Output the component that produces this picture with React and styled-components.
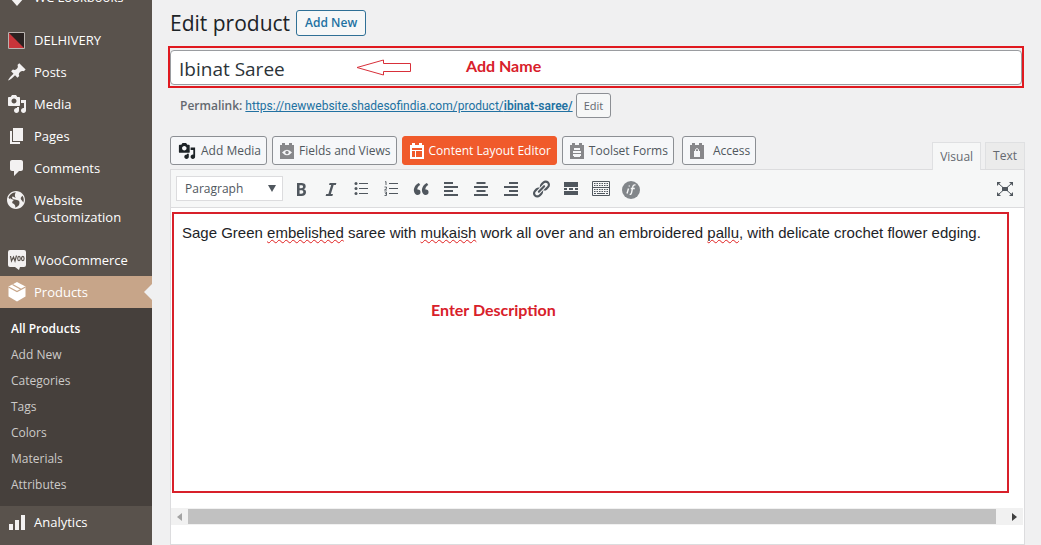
import React from "react";
import styled, { createGlobalStyle, css } from "styled-components";

const Global = createGlobalStyle`
  *, *::before, *::after { box-sizing: border-box; }
  html, body, #root { height: 100%; }
  body {
    margin: 0;
    background: #f0f0f1;
    color: #3c434a;
    font: 12px/18px "Open Sans", "Noto Sans", sans-serif;
    overflow: hidden;
  }
  button, input, select { font: inherit; color: inherit; margin: 0; }
  ul { list-style: none; margin: 0; padding: 0; }
`;

const Page = styled.div`
  display: flex;
  height: 100vh;
  overflow: hidden;
`;

/* ---------- sidebar ---------- */

const Sidebar = styled.nav`
  flex: 0 0 152px;
  background: #59524c;
  overflow: hidden;
`;

const Menu = styled.ul`
  margin-top: -19px;
`;

const MenuItem = styled.li`
  margin-top: ${(p) => (p.$separated ? "11px" : "0")};
`;

const MenuLink = styled.a`
  position: relative;
  display: flex;
  gap: 7px;
  padding: 8px 12px 7px 7px;
  font-size: 13px;
  line-height: 17px;
  color: #fff;
  text-decoration: none;
  background: ${(p) => (p.$current ? "#c7a589" : "transparent")};
  ${(p) =>
    p.$current &&
    css`
      &::after {
        content: "";
        position: absolute;
        right: 0;
        top: 8px;
        border: 8px solid transparent;
        border-left: 0;
        border-right-color: #f0f0f1;
      }
    `}
`;

const MenuIcon = styled.svg`
  flex: none;
  width: 20px;
  height: 20px;
  margin: -2px 0 -1px;
  fill: #f3f1f1;
`;

const Submenu = styled.ul`
  padding: 8px 0;
  background: #46403c;
`;

const SubmenuLink = styled.a`
  display: block;
  padding: 4px 11px;
  line-height: 18px;
  color: ${(p) => (p.$current ? "#fff" : "#cdcbc9")};
  font-weight: ${(p) => (p.$current ? 600 : 400)};
  text-decoration: none;
`;

/* ---------- main column ---------- */

const Main = styled.main`
  flex: 1;
  min-width: 0;
  display: flex;
  flex-direction: column;
  padding: 10px 16px 0 18px;
`;

const Heading = styled.header`
  display: flex;
  align-items: center;
  gap: 6px;
  height: 26px;
  margin-bottom: 10px;
`;

const Title = styled.h1`
  margin: 0;
  font-size: 21px;
  line-height: 26px;
  font-weight: 400;
  color: #1d2327;
`;

const AddNewButton = styled.button`
  height: 26px;
  padding: 0 8px;
  border: 1px solid #2f7096;
  border-radius: 3px;
  background: #f6f7f7;
  color: #2271a1;
  font-weight: 600;
`;

const NameFrame = styled.div`
  position: relative;
  height: 42px;
  margin: 0 1px 0 -2px;
  padding: 2px 0 0;
  border: 2px solid #e0191f;
`;

const NameInput = styled.input`
  display: block;
  width: 100%;
  height: 35px;
  padding: 2px 8px 0;
  border: 1px solid #9a9ca0;
  border-radius: 4px;
  background: #fff;
  font-size: 19px;
  color: #2c3338;
`;

const Note = styled.span`
  position: absolute;
  color: #d8202a;
  font: 700 16px/20px Lato, sans-serif;
  white-space: nowrap;
`;

const NameNote = styled(Note)`
  left: 296px;
  top: 8px;
`;

const DescriptionNote = styled(Note)`
  left: 257px;
  top: 86px;
`;

const Arrow = styled.svg`
  position: absolute;
  left: 186px;
  top: 11px;
  width: 56px;
  height: 17px;
  fill: #fff;
  stroke: #d8303a;
`;

const Permalink = styled.div`
  display: flex;
  align-items: center;
  gap: 3px;
  height: 25px;
  margin-top: 5px;
  padding-left: 10px;
  color: #646970;
  white-space: nowrap;

  strong { font-weight: 600; }
`;

const PermalinkUrl = styled.a`
  color: #2271a1;
  font-family: Roboto, "Open Sans", sans-serif;
`;

const EditButton = styled.button`
  height: 25px;
  padding: 0 7px;
  border: 1px solid #8c8f94;
  border-radius: 3px;
  background: #f6f7f7;
  font-size: 11px;
`;

const Tools = styled.div`
  display: flex;
  justify-content: space-between;
  align-items: flex-end;
  height: 33px;
  margin-top: 18px;
`;

const MediaButtons = styled.div`
  display: flex;
  gap: 5px;
  align-self: flex-start;
`;

const MediaButton = styled.button`
  display: flex;
  align-items: center;
  gap: 4px;
  height: 29px;
  padding: 0 5px 0 6px;
  border: 1px solid ${(p) => (p.$primary ? "#f05a2b" : "#8c8f94")};
  border-radius: 3px;
  background: ${(p) => (p.$primary ? "#f05a2b" : "#f6f7f9")};
  color: ${(p) => (p.$primary ? "#fff" : "#50575e")};
  white-space: nowrap;

  svg {
    flex: none;
    width: 16px;
    height: 18px;
    fill: ${(p) => (p.$primary ? "#fff" : "#87878a")};
  }
  svg.media { width: 20px; fill: #1d2327; }
  &:last-child { margin-left: 3px; gap: 8px; }
`;

const Tabs = styled.div`
  display: flex;
  gap: 4px;
`;

const Tab = styled.button`
  height: ${(p) => (p.$active ? "28px" : "27px")};
  margin-bottom: ${(p) => (p.$active ? "-1px" : "0")};
  padding: 0 7px;
  border: 1px solid #dfe0e2;
  border-bottom: 0;
  position: relative;
  background: ${(p) => (p.$active ? "#f6f7f7" : "#ebebeb")};
  color: #646970;
`;

const Editor = styled.section`
  flex: 1;
  min-height: 0;
  display: flex;
  flex-direction: column;
  border: 1px solid #dcdcde;
  border-bottom: 0;
  background: #fff;
`;

const Toolbar = styled.div`
  flex: none;
  display: flex;
  align-items: center;
  height: 38px;
  padding: 0 4px 0 5px;
  border-bottom: 1px solid #dcdcde;
  background: #f6f7f7;
`;

const FormatBox = styled.div`
  position: relative;
  width: 107px;
  margin-right: 3px;

  &::after {
    content: "";
    position: absolute;
    right: 7px;
    top: 9px;
    border: 4px solid transparent;
    border-top: 7px solid #50575e;
    border-bottom: 0;
    pointer-events: none;
  }
`;

const FormatSelect = styled.select`
  display: block;
  appearance: none;
  width: 100%;
  height: 25px;
  padding: 0 8px;
  border: 1px solid #dcdcde;
  border-radius: 0;
  background: #fff;
  color: #50575e;
`;

const ToolButton = styled.button`
  display: grid;
  place-items: center;
  width: 30px;
  height: 30px;
  padding: 0;
  border: 0;
  background: none;
  margin-left: ${(p) => (p.$end ? "auto" : "0")};

  svg { width: 20px; height: 20px; fill: #50575e; }
`;

const Body = styled.div`
  position: relative;
  flex: 0 0 281px;
  margin: 4px 15px 15px 1px;
  padding: 9px 8px;
  border: 2px solid #d8202a;
`;

const Description = styled.div`
  height: 100%;
  outline: 0;
  color: #1d2327;
  font: 15px/20px "Liberation Sans", Arial, sans-serif;
`;

const Misspelt = styled.span`
  text-decoration: underline wavy #e02020 1px;
  text-underline-offset: 1px;
  text-decoration-skip-ink: none;
`;

const ScrollTrack = styled.div`
  flex: none;
  display: flex;
  align-items: center;
  height: 17px;
  margin-right: 1px;
  background: #f1f1f1;
`;

const ScrollArrow = styled.button`
  width: 17px;
  height: 17px;
  padding: 0;
  border: 0;
  background: none;
  display: grid;
  place-items: center;

  svg { width: 5px; height: 8px; fill: ${(p) => (p.$enabled ? "#404040" : "#a3a3a3")}; }
`;

const ScrollArea = styled.div`
  flex: 1;
  padding-right: 10px;
`;

const ScrollThumb = styled.div`
  height: 15px;
  background: #c1c1c1;
`;

const StatusBar = styled.footer`
  flex: none;
  margin-top: 19px;
  height: 24px;
  border-top: 1px solid #dcdcde;
  background: #f0f0f1;
`;

/* ---------- icons ---------- */

const mediaPath =
  "M13 11V4c0-.55-.45-1-1-1h-1.67L9 1H5L3.67 3H2c-.55 0-1 .45-1 1v7c0 .55.45 1 1 1h10c.55 0 1-.45 1-1zM7 4.5c1.38 0 2.5 1.12 2.5 2.5S8.38 9.5 7 9.5 4.5 8.38 4.5 7 5.62 4.5 7 4.5zM14 6h5v10.5c0 1.38-1.12 2.5-2.5 2.5S14 17.88 14 16.5s1.12-2.5 2.5-2.5c.17 0 .34.02.5.05V9h-3V6zm-4 8.05V13h2v3.5c0 1.38-1.12 2.5-2.5 2.5S7 17.88 7 16.5 8.12 14 9.5 14c.17 0 .34.02.5.05z";

const menuIcons = {
  diamond: <path d="M6 5h8l3 6-7 8-7-8z" />,
  delhivery: (
    <>
      <path d="M1.500 2.500h16v16h-16z" fill="#2a2221" />
      <path d="M2 3v15h15z" fill="#c8353a" />
      <path d="M1.500 2.500h16v16h-16z" fill="none" stroke="#b9b3af" />
    </>
  ),
  pin: (
    <path d="M10.440 3.020l1.820-1.820 6.360 6.350-1.830 1.820c-1.050-.68-2.480-.57-3.410.36l-.75.75c-.92.93-1.040 2.350-.35 3.410l-1.830 1.820-2.410-2.410-2.800 2.790c-.42.42-3.380 2.710-3.800 2.290s1.860-3.390 2.280-3.810l2.790-2.790L4.100 9.360l1.830-1.820c1.050.69 2.480.57 3.400-.36l.75-.75c.93-.92 1.050-2.350.36-3.410z" />
  ),
  media: <path d={mediaPath} />,
  pages: <path d="M6 15V2h10v13H6zm-1 1h8v2H3V5h2v11z" />,
  comment: (
    <path d="M5 2h9c1.100 0 2 .9 2 2v7c0 1.100-.9 2-2 2h-2l-5 5v-5H5c-1.100 0-2-.9-2-2V4c0-1.100.9-2 2-2z" />
  ),
  globe: (
    <path
      transform="translate(0 1)"
      d="M9 0C4.030 0 0 4.030 0 9s4.030 9 9 9 9-4.030 9-9-4.030-9-9-9zm3.460 11.950c0 1.470-.8 3.300-4.060 4.700.3-4.170-2.520-3.690-3.200-5 .126-1.100.804-2.063 1.800-2.550-1.552-.266-3-.96-4.180-2 .05.47.28.904.64 1.210-.782-.295-1.458-.817-1.940-1.500.977-3.225 3.883-5.482 7.250-5.630-.84 1.380-1.500 4.130 0 5.570C7.230 7 6.260 5 5.410 5.790c-1.130 1.060.33 2.510 3.420 3.080 3.290.59 3.660 1.580 3.630 3.080zm1.340-4c-.32-1.110.62-2.230 1.690-3.140 1.356 1.955 1.670 4.450.84 6.680-.77-1.890-2.170-2.320-2.530-3.570v.03z"
    />
  ),
  woo: (
    <>
      <path d="M3 0h14q2 0 2 2v13q0 2-2 2h-4l-1 3-4-3H3q-2 0-2-2V2q0-2 2-2z" />
      <path
        d="M3.500 6l1 5 2-4 1.500 4L9.500 5.500"
        fill="none"
        stroke="#59524c"
        strokeWidth="1.200"
      />
      <ellipse cx="12" cy="8.500" rx="1.300" ry="2.100" fill="none" stroke="#59524c" strokeWidth="1.100" />
      <ellipse cx="15.800" cy="8.500" rx="1.300" ry="2.100" fill="none" stroke="#59524c" strokeWidth="1.100" />
    </>
  ),
  box: (
    <>
      <path d="M10 0l8.500 4.500v10L10 19.500 1.500 14.500v-10z" fill="#fff" />
      <path d="M1.500 5L10 9.500 18.500 5M5.500 2.500l8.500 4.700" fill="none" stroke="#c7a589" strokeWidth="1.200" />
    </>
  ),
  bars: <path d="M2 12h4v6H2zM8 8h4v10H8zM14 3h4v15h-4z" />,
};

const Brick = ({ children }) => (
  <svg viewBox="0 0 16 18" aria-hidden="true">
    <path fillRule="evenodd" d="M3 1h3v2h4V1h3v2h2v14H1V3h2z" />
    {children}
  </svg>
);

const AlignIcon = ({ x }) => (
  <>
    {[9, 14, 9, 14].map((w, i) => (
      <rect key={i} x={3 + (14 - w) * x} y={3 + i * 4} width={w} height="2" />
    ))}
  </>
);

const toolIcons = [
  [
    "Bold",
    <path d="M6 4v13h4.540c1.370 0 2.460-.33 3.260-1 .8-.66 1.200-1.580 1.200-2.770 0-.84-.17-1.510-.51-2.010s-.9-.85-1.670-1.030v-.09c.57-.1 1.020-.4 1.360-.9s.51-1.130.51-1.910c0-1.140-.39-1.980-1.170-2.500C12.750 4.260 11.500 4 9.780 4H6zm2.570 5.150V6.260h1.360c.73 0 1.270.11 1.610.32.34.22.51.58.51 1.070 0 .54-.16.92-.47 1.150s-.82.35-1.510.35h-1.500zm0 2.190h1.600c1.440 0 2.160.53 2.160 1.610 0 .6-.17 1.050-.51 1.340s-.86.43-1.570.43H8.570v-3.380z" />,
  ],
  ["Italic", <path d="M14.780 6h-2.130l-2.800 9h2.120l-.62 2H4.600l.62-2h2.140l2.800-9H8.030l.62-2h6.750z" />],
  [
    "Bulleted list",
    <>
      <path d="M8 4h9v1H8zM8 9h9v1H8zM8 14h9v1H8z" />
      {[4.5, 9.5, 14.5].map((y) => (
        <circle key={y} cx="5" cy={y} r="1.500" />
      ))}
    </>,
  ],
  [
    "Numbered list",
    <>
      <path d="M8 4h9v1H8zM8 9h9v1H8zM8 14h9v1H8z" />
      <path
        d="M4 3l1-.5V6M3.500 8h2v1.500l-2 1.500h2.500M3.500 13h2v3.500h-2M4 14.700h1.500"
        fill="none"
        stroke="#50575e"
        strokeWidth=".9"
      />
    </>,
  ],
  [
    "Blockquote",
    <path d="M9.490 13.220c0-.74-.2-1.380-.61-1.900-.62-.78-1.830-.88-2.530-.72-.29-1.650 1.110-3.750 2.920-4.650L7.880 4c-2.730 1.300-5.420 4.280-4.960 8.050C3.210 14.430 4.590 16 6.540 16c.85 0 1.560-.25 2.120-.75s.83-1.180.83-2.030zm8.050 0c0-.74-.2-1.380-.61-1.900-.63-.78-1.830-.88-2.530-.72-.29-1.650 1.110-3.750 2.920-4.650L15.930 4c-2.730 1.300-5.410 4.280-4.950 8.050.29 2.380 1.660 3.950 3.610 3.950.85 0 1.560-.25 2.120-.75s.83-1.180.83-2.030z" />,
  ],
  ["Align left", <AlignIcon x={0} />],
  ["Align center", <AlignIcon x={0.5} />],
  ["Align right", <AlignIcon x={1} />],
  [
    "Insert link",
    <path d="M17.740 2.760c1.680 1.690 1.680 4.410 0 6.100l-1.530 1.520c-1.120 1.120-2.700 1.470-4.140 1.090l2.620-2.610.76-.77.76-.76c.84-.84.84-2.200 0-3.040-.84-.85-2.200-.85-3.040 0l-.77.76-3.380 3.380c-.37-1.440-.02-3.020 1.100-4.140l1.520-1.530c1.690-1.680 4.420-1.680 6.100 0zM8.590 13.430l5.340-5.340c.42-.42.42-1.100 0-1.520-.44-.43-1.130-.39-1.530 0l-5.330 5.340c-.42.42-.42 1.100 0 1.520.44.43 1.130.39 1.520 0zm-.76 2.290l4.140-4.150c.38 1.440.03 3.020-1.090 4.140l-1.520 1.530c-1.690 1.680-4.410 1.680-6.100 0-1.680-1.680-1.680-4.420 0-6.100l1.530-1.520c1.120-1.120 2.700-1.470 4.140-1.100l-4.140 4.150c-.85.84-.85 2.200 0 3.050.84.84 2.200.84 3.040 0z" />,
  ],
  ["Read more", <path d="M3 3h14v5H3zM3 9h3v2H3zM8 9h4v2H8zM14 9h3v2h-3zM3 12h14v4H3z" />],
  [
    "Toolbar toggle",
    <>
      <path d="M1.500 2.500h17v14h-17zM1.500 8.500h17" fill="none" stroke="#50575e" />
      <path
        d="M3 4.500h14M3 6.500h14M3 10.500h14M3 12.500h14"
        fill="none"
        stroke="#50575e"
        strokeWidth="1.200"
        strokeDasharray="1.500 1"
      />
      <path d="M3 14h2v1H3zM6 14h8v1H6zM15 14h2v1h-2z" />
    </>,
  ],
  [
    "Conditional output",
    <>
      <circle cx="10" cy="11" r="9" fill="#82868a" />
      <path
        d="M7.500 9.500L6 14.500M8.300 6.500v1M14.500 6.200c-1.500-1-2.500.3-2.800 2l-1 5c-.3 1.700-1 2.500-2 2M9.800 9.500h4"
        fill="none"
        stroke="#f6f7f7"
        strokeWidth="1.400"
      />
    </>,
  ],
];

/* ---------- data ---------- */

const menu = [
  { label: "WC Lookbooks", icon: "diamond" },
  { label: "DELHIVERY", icon: "delhivery", separated: true },
  { label: "Posts", icon: "pin" },
  { label: "Media", icon: "media" },
  { label: "Pages", icon: "pages" },
  { label: "Comments", icon: "comment" },
  { label: "Website Customization", icon: "globe" },
  { label: "WooCommerce", icon: "woo", separated: true },
  {
    label: "Products",
    icon: "box",
    current: true,
    children: ["All Products", "Add New", "Categories", "Tags", "Colors", "Materials", "Attributes"],
  },
  { label: "Analytics", icon: "bars" },
];

export default function App() {
  return (
    <>
      <Global />
      <Page>
        <Sidebar aria-label="Main menu">
          <Menu>
            {menu.map((m) => (
              <MenuItem key={m.label} $separated={m.separated}>
                <MenuLink href="#" $current={m.current}>
                  <MenuIcon viewBox="0 0 20 20" aria-hidden="true">
                    {menuIcons[m.icon]}
                  </MenuIcon>
                  <span>{m.label}</span>
                </MenuLink>
                {m.children && (
                  <Submenu>
                    {m.children.map((c, i) => (
                      <li key={c}>
                        <SubmenuLink href="#" $current={i === 0}>
                          {c}
                        </SubmenuLink>
                      </li>
                    ))}
                  </Submenu>
                )}
              </MenuItem>
            ))}
          </Menu>
        </Sidebar>

        <Main>
          <Heading>
            <Title>Edit product</Title>
            <AddNewButton>Add New</AddNewButton>
          </Heading>

          <NameFrame>
            <NameInput aria-label="Product name" defaultValue="Ibinat Saree" />
            <Arrow viewBox="0 0 56 17" aria-hidden="true">
              <path d="M1 8.500L27.500 1v3.500h27v8h-27V16z" />
            </Arrow>
            <NameNote>Add Name</NameNote>
          </NameFrame>

          <Permalink>
            <strong>Permalink:</strong>
            <PermalinkUrl href="#">
              https://newwebsite.shadesofindia.com/product/<strong>ibinat-saree/</strong>
            </PermalinkUrl>
            <EditButton>Edit</EditButton>
          </Permalink>

          <Tools>
            <MediaButtons>
              <MediaButton>
                <svg className="media" viewBox="0 0 20 20" aria-hidden="true">
                  <path d={mediaPath} />
                </svg>
                Add Media
              </MediaButton>
              <MediaButton>
                <Brick>
                  <path d="M3 10.500q5-5.500 10 0q-5 5.500-10 0z" fill="#f6f7f9" />
                  <circle cx="8" cy="10.500" r="1.700" />
                </Brick>
                Fields and Views
              </MediaButton>
              <MediaButton $primary>
                <Brick>
                  <path d="M3 6h10v2H3zM3 9h3v6H3zM7 9h6v6H7z" fill="#f05a2b" />
                </Brick>
                Content Layout Editor
              </MediaButton>
              <MediaButton>
                <Brick>
                  <path d="M5 6h6v2H5zM4 9h8v2H4zM4 12h8v2H4zM5 14h6v1H5z" fill="#f6f7f9" />
                </Brick>
                Toolset Forms
              </MediaButton>
              <MediaButton>
                <Brick>
                  <path d="M5 9h6v6H5z" fill="#f6f7f9" />
                  <path d="M6.500 9V7.500q1.500-2 3 0V9" fill="none" stroke="#f6f7f9" />
                </Brick>
                Access
              </MediaButton>
            </MediaButtons>
            <Tabs>
              <Tab $active>Visual</Tab>
              <Tab>Text</Tab>
            </Tabs>
          </Tools>

          <Editor>
            <Toolbar>
              <FormatBox>
                <FormatSelect aria-label="Text format">
                  <option>Paragraph</option>
                </FormatSelect>
              </FormatBox>
              {toolIcons.map(([label, icon]) => (
                <ToolButton key={label} aria-label={label}>
                  <svg viewBox="0 0 20 20">{icon}</svg>
                </ToolButton>
              ))}
              <ToolButton $end aria-label="Fullscreen">
                <svg viewBox="0 0 20 20">
                  <path d="M7 8h6v4H7zM2 3h4L2 7zM18 3v4l-4-4zM2 17v-4l4 4zM18 17h-4l4-4z" />
                  <path d="M4 5l4 3.500M16 5l-4 3.500M4 15l4-3.500M16 15l-4-3.500" stroke="#50575e" />
                </svg>
              </ToolButton>
            </Toolbar>

            <Body>
              <Description
                role="textbox"
                aria-label="Description"
                contentEditable
                suppressContentEditableWarning
                spellCheck={false}
              >
                Sage Green <Misspelt>embelished</Misspelt> saree with <Misspelt>mukaish</Misspelt> work all over
                and an embroidered <Misspelt>pallu</Misspelt>, with delicate crochet flower edging.
              </Description>
              <DescriptionNote>Enter Description</DescriptionNote>
            </Body>

            <ScrollTrack>
              <ScrollArrow aria-label="Scroll left">
                <svg viewBox="0 0 5 8">
                  <path d="M5 0v8L0 4z" />
                </svg>
              </ScrollArrow>
              <ScrollArea>
                <ScrollThumb />
              </ScrollArea>
              <ScrollArrow $enabled aria-label="Scroll right">
                <svg viewBox="0 0 5 8">
                  <path d="M0 0v8l5-4z" />
                </svg>
              </ScrollArrow>
            </ScrollTrack>
            <StatusBar />
          </Editor>
        </Main>
      </Page>
    </>
  );
}
